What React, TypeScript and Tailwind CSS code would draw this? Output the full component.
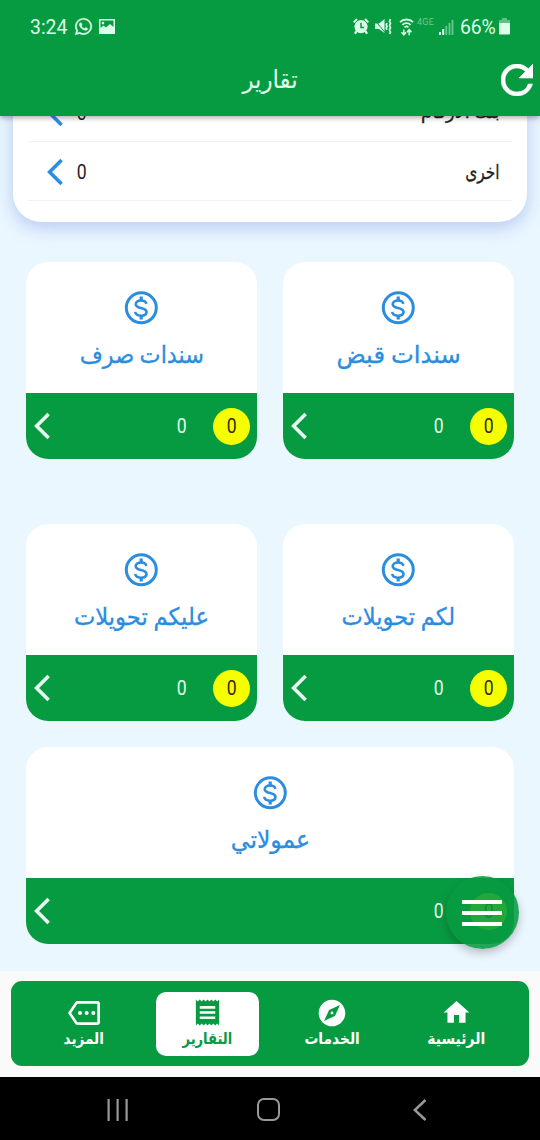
import { FaWhatsapp } from 'react-icons/fa';
import { MdExplore, MdHome, MdOutlineMore, MdReceipt } from 'react-icons/md';

const DollarIcon = () => (
  <svg width="34" height="34" viewBox="0 0 34 34" fill="none" stroke="#2a8ddf" className="-ml-px">
    <circle cx="17.300" cy="16.800" r="15" strokeWidth="3" />
    <path d="M22.4 12.8C21.8 10.6 19.8 9.500 17 9.500c-3 0-5.300 1.400-5.300 3.700 0 2.500 2.500 3.100 5.300 3.800 3 .7 5.500 1.500 5.500 4 0 2.400-2.300 3.700-5.500 3.700-3.300 0-5.400-1.400-5.800-3.800" strokeWidth="2.600" />
    <path d="M17.200 5.500v4M17.200 24.500v4" strokeWidth="3.200" />
  </svg>
);

const Chevron = ({ className }: { className: string }) => (
  <svg width="18" height="28" viewBox="0 0 18 28" fill="none" stroke="currentColor" strokeWidth="3.600" className={className}>
    <path d="M15.600 2 3.600 14l12 12" />
  </svg>
);

const StatusBar = () => (
  <div className="flex h-[53px] items-center pl-[30px] pr-[30px] text-[#dcffe9]">
    <span className="w-[38px] origin-left scale-x-[0.97] text-[20px] leading-none whitespace-nowrap">3:24</span>
    <FaWhatsapp size={19} className="ml-[6px]" stroke="currentColor" strokeWidth="10" />
    <svg width="16" height="15" viewBox="0 0 16 15" className="ml-[6px]" fill="currentColor" fillRule="evenodd">
      <path d="M0 0h16v15H0zM1.500 1.500v7.500l3-2.500 2.500 2 4-3.500 3.500 3V1.500zM4 2.800a1.300 1.300 0 1 1 0 2.600 1.300 1.300 0 0 1 0-2.600z" />
    </svg>
    <div className="flex-1" />
    <svg width="16" height="17" viewBox="0 0 16 17" fill="none" stroke="currentColor">
      <circle cx="8" cy="8.600" r="6.600" fill="currentColor" stroke="none" />
      <path d="M8 4.800v4.600h3.200" stroke="#079b41" strokeWidth="1.500" />
      <path d="M.6 4.400 4 1M15.400 4.400 12 1" strokeWidth="1.900" />
      <path d="m3.500 13-1.500 2.800M12.500 13l1.500 2.800" strokeWidth="2.200" />
    </svg>
    <svg width="17" height="17" viewBox="0 0 17 17" className="ml-[6px]" fill="none" stroke="currentColor">
      <path d="M0 5.500h4L9.500 1v14L4 11H0z" fill="currentColor" stroke="none" />
      <path d="m-.5 1.500 10.500 13" stroke="#079b41" strokeWidth="1" />
      <path d="m12 5-.8 1.700.8 1.700-.8 1.700.8 1.700M15.500 1l-1 2.200 1 2.200-1 2.200 1 2.200-1 2.200 1 2.200-1 1.800" strokeWidth="1.700" />
    </svg>
    <svg width="15" height="18" viewBox="0 0 15 18" className="ml-[7px]" fill="none" stroke="currentColor" strokeWidth="1.800">
      <path d="M1 4.200a9.200 9.200 0 0 1 13 0M3.400 6.900a5.800 5.800 0 0 1 8.200 0M5.600 9.300a2.800 2.800 0 0 1 3.800 0" />
      <path d="M4.800 11.500v5M2.500 14.300l2.300 2.500 2.300-2.500M10.200 17.200v-5M7.900 14.200l2.300-2.500 2.300 2.500" strokeWidth="1.500" />
    </svg>
    <div className="ml-[3px] mb-[9px] w-[20px] text-[9px] leading-[9px] tracking-[0.3px] text-[#6fc78e]">4GE</div>
    <svg width="15" height="16" viewBox="0 0 15 16" className="ml-[2px]" fill="currentColor">
      <path d="M0 13h2v3H0zM3.200 10h2v6h-2z" />
      <path d="M6.400 7h1.800v9H6.400zM9.600 4h1.800v12H9.600zM12.600 1h1.800v15h-1.800z" opacity=".45" />
    </svg>
    <span className="ml-[6px] w-[39px] origin-left scale-x-[0.97] text-[20px] leading-none tracking-[-0.2px] whitespace-nowrap">66%</span>
    <svg width="11" height="17" viewBox="0 0 11 17" fill="currentColor">
      <path d="M3 0h5v2h3v4H0V2h3z" opacity=".4" />
      <path d="M0 5h11v10.500a1 1 0 0 1-1 1H1a1 1 0 0 1-1-1z" />
    </svg>
  </div>
);

const AppHeader = () => (
  <header className="relative z-10 h-[116px] bg-[#079b41] shadow-[0_2px_5px_rgba(40,10,40,0.35)]">
    <StatusBar />
    <div className="grid h-[53px] grid-cols-[1fr_80px_1fr] items-center">
      <div />
      <h1 dir="rtl" className="flex justify-center whitespace-nowrap text-[25px] leading-none font-normal text-[#e2ffed]">
        <span className="scale-x-[0.92]">تقارير</span>
      </h1>
      <svg width="32" height="32" viewBox="4 4 16 16" className="mr-[7px] justify-self-end" fill="#fff" stroke="#fff" strokeWidth=".3">
        <path d="M17.650 6.350A7.958 7.958 0 0 0 12 4c-4.420 0-7.990 3.580-7.990 8s3.570 8 7.990 8c3.730 0 6.840-2.550 7.730-6h-2.080A5.990 5.990 0 0 1 12 18c-3.310 0-6-2.690-6-6s2.690-6 6-6c1.660 0 3.140.690 4.220 1.780L13 11h7V4l-2.350 2.350z" />
      </svg>
    </div>
  </header>
);

const ListRow = ({ label, labelClass }: { label: string; labelClass: string }) => (
  <div className="flex h-[59px] items-center border-b border-[#f1f1f4] pt-px pl-[18px] pr-3">
    <Chevron className="text-[#2a8ddf]" />
    <span className="ml-[12px] scale-x-[0.88] text-[20px] text-[#222]">0</span>
    <span dir="rtl" className={`ml-auto origin-right whitespace-nowrap text-[#222] [-webkit-text-stroke:0.3px_#222] ${labelClass}`}>{label}</span>
  </div>
);

type ReportCardProps = {
  title: string;
  titleClass: string;
};

const ReportCard = ({ title, titleClass }: ReportCardProps) => (
  <div className="flex h-[197px] flex-1 flex-col overflow-hidden rounded-[22px] bg-white">
    <div className="flex h-[131px] flex-col items-center pt-[29px]">
      <DollarIcon />
      <div dir="rtl" className="mt-[10px] flex h-[40px] items-center whitespace-nowrap text-[24px] text-[#2a8ddf] [-webkit-text-stroke:0.3px_#2a8ddf]">
        <span className={titleClass}>{title}</span>
      </div>
    </div>
    <div className="flex h-[66px] items-center bg-[#079b41] pl-[7px] pr-[7px] text-[20px]">
      <Chevron className="text-[#e9fff1]" />
      <span className="ml-auto scale-x-[0.88] text-[#e2ffed]">0</span>
      <span className="ml-[26px] flex size-[37px] items-center justify-center rounded-full bg-[#f6ff00] text-[#332b08]">
        <span className="scale-x-[0.88]">0</span>
      </span>
    </div>
  </div>
);

const navItems = [
  { label: 'المزيد', icon: MdOutlineMore, size: 32, active: false, textClass: 'scale-x-[0.85]' },
  { label: 'التقارير', icon: MdReceipt, size: 31, active: true, textClass: 'scale-x-[0.82]' },
  { label: 'الخدمات', icon: MdExplore, size: 32, active: false, textClass: 'scale-x-[0.86]' },
  { label: 'الرئيسية', icon: MdHome, size: 31, active: false, textClass: 'scale-x-[0.87]' },
];

const BottomNav = () => (
  <div className="h-[106px] bg-[#fafafa] px-[11px] pt-[10px]">
    <nav className="flex h-[85px] items-center justify-between rounded-[11px] bg-[#079b41] px-[21px]">
      {navItems.map((item) => {
        const Icon = item.icon;
        return (
          <div
            key={item.label}
            className={`flex h-[64px] w-[103px] flex-col items-center rounded-[10px] pt-[5px] ${item.active ? 'bg-white text-[#079b41]' : 'text-white'}`}
          >
            <div className="flex h-[32px] items-center">
              <Icon size={item.size} />
            </div>
            <div dir="rtl" className="flex h-[20px] items-center whitespace-nowrap text-[16px] leading-none font-bold">
              <span className={item.textClass}>{item.label}</span>
            </div>
          </div>
        );
      })}
    </nav>
  </div>
);

const SystemNav = () => (
  <div className="flex h-[63px] items-center bg-black pt-[2px] text-[#999]">
    <svg width="22" height="22" viewBox="0 0 22 22" className="ml-[107px]" fill="currentColor">
      <path d="M.500 0h2.200v22h-2.200zM9.500 0h2.200v22h-2.200zM18.500 0h2.200v22h-2.200z" />
    </svg>
    <div className="ml-[128px] size-[23px] rounded-[7px] border-[2.5px] border-[#999]" />
    <svg width="14" height="22" viewBox="0 0 14 22" className="ml-[133px]" fill="none" stroke="currentColor" strokeWidth="2.500">
      <path d="M12.500 1 1.800 11l10.700 10" />
    </svg>
  </div>
);

export default function App() {
  return (
    <div className="relative flex h-[1140px] w-[540px] flex-col overflow-hidden bg-[#ebf7ff] font-[Roboto,'DejaVu_Sans',sans-serif]">
      <AppHeader />

      <main className="h-[855px] overflow-hidden">
        <section className="mx-[13px] -mt-[33px] h-[139px] rounded-b-[28px] bg-white px-[15px] shadow-[0_6px_18px_rgba(90,125,220,0.36)]">
          <ListRow label="بنك الارقام" labelClass="text-[19px] scale-x-[0.94]" />
          <ListRow label="اخرى" labelClass="text-[20px] scale-x-[0.77]" />
        </section>

        <div className="mx-[26px] mt-[40px] flex gap-[26px]">
          <ReportCard title="سندات صرف" titleClass="scale-x-[0.93]" />
          <ReportCard title="سندات قبض" titleClass="scale-x-[1.01]" />
        </div>
        <div className="mx-[26px] mt-[65px] flex gap-[26px]">
          <ReportCard title="عليكم تحويلات" titleClass="scale-x-[0.945]" />
          <ReportCard title="لكم تحويلات" titleClass="scale-x-[0.94]" />
        </div>
        <div className="mx-[26px] mt-[26px] flex">
          <ReportCard title="عمولاتي" titleClass="scale-x-[0.98]" />
        </div>
      </main>

      <BottomNav />
      <SystemNav />

      <button className="absolute top-[876px] left-[446px] flex size-[73px] flex-col items-center justify-center gap-[7px] rounded-full bg-[#079b41]/88 pr-px shadow-[0_4px_8px_rgba(30,10,30,0.25)]">
        <span className="h-[4px] w-[40px] bg-white" />
        <span className="h-[4px] w-[40px] bg-white" />
        <span className="h-[4px] w-[40px] bg-white" />
      </button>
    </div>
  );
}
